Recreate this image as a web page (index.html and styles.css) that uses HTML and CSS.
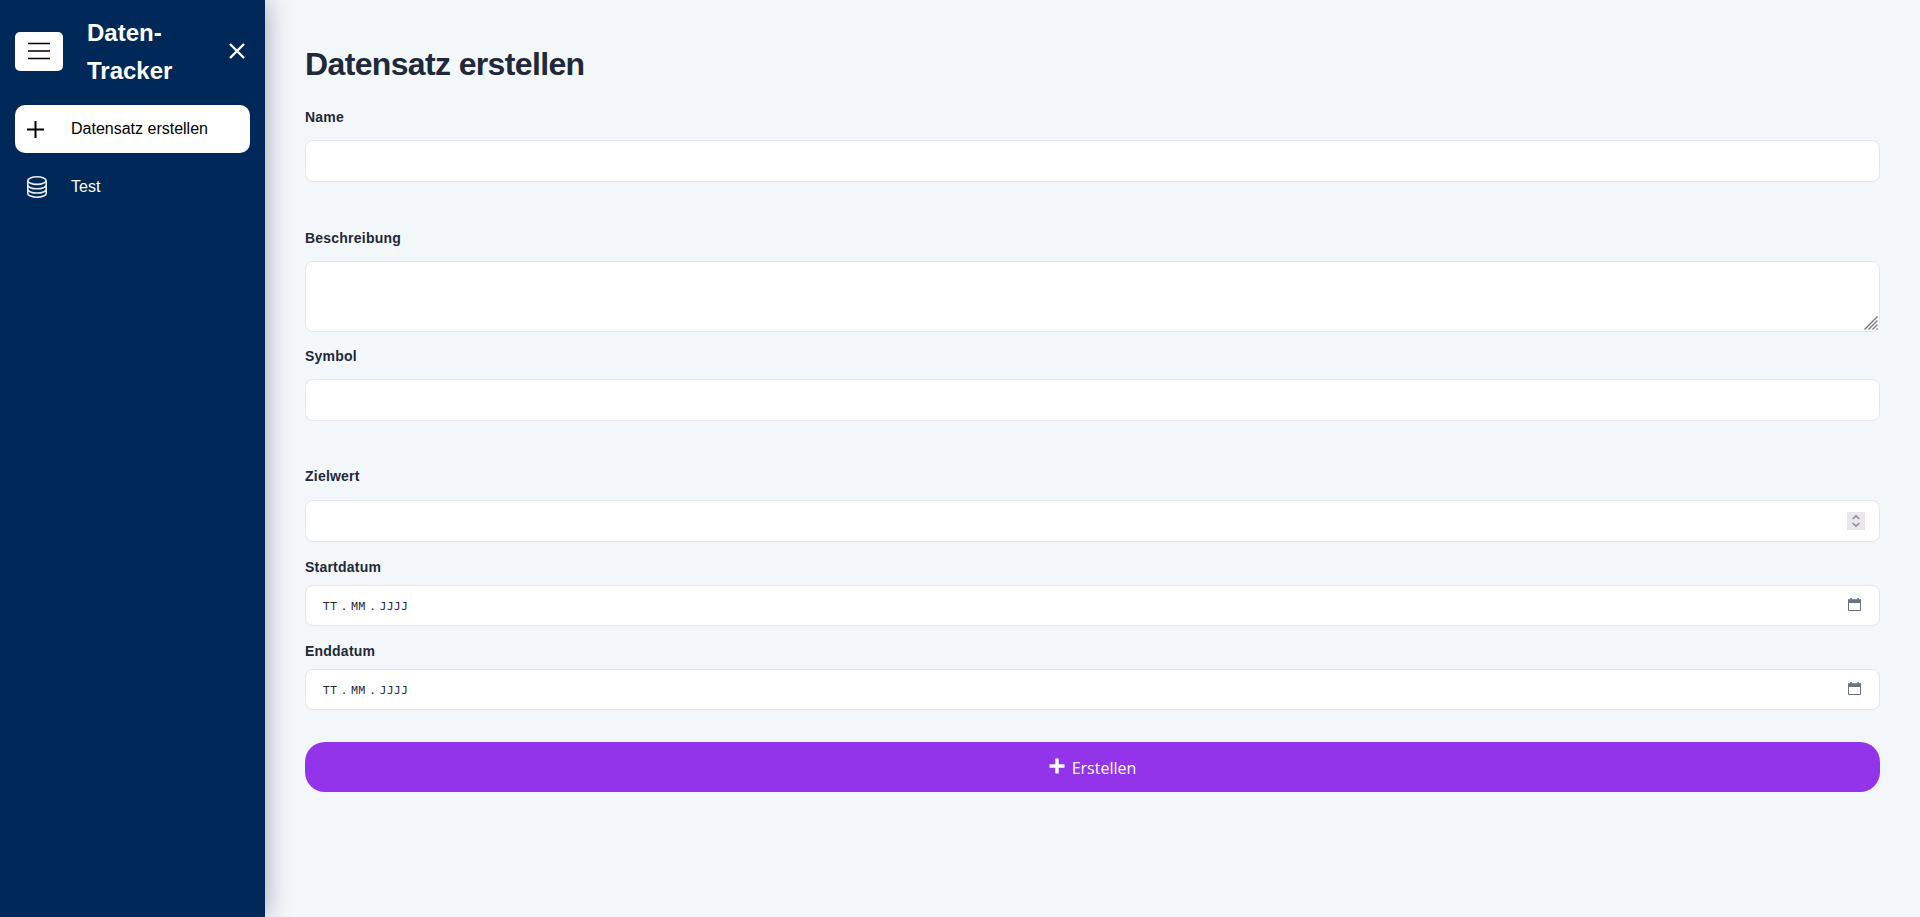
FILE: index.html
```
<!DOCTYPE html>
<html lang="de">
<head>
<meta charset="utf-8">
<title>Daten-Tracker</title>
<link rel="stylesheet" href="styles.css">
</head>
<body>
<aside class="sidebar">
  <header class="brand">
    <button class="menu" aria-label="Menü"><svg width="22" height="18" viewBox="0 0 22 18"><path d="M0 1.5h22M0 9h22M0 16.5h22" stroke="#000" stroke-width="1.7"/></svg></button>
    <div class="brand-name">Daten-<br>Tracker</div>
    <button class="close" aria-label="Schließen"><svg width="16" height="16" viewBox="0 0 16 16"><path d="M1 1l14 14M15 1L1 15" stroke="#fff" stroke-width="2.4"/></svg></button>
  </header>
  <nav class="nav">
    <a class="nav-item active"><span class="nav-icon"><svg width="17" height="17" viewBox="0 0 17 17"><path d="M8.5 0v17M0 8.5h17" stroke="#000" stroke-width="2"/></svg></span><span class="nav-text">Datensatz erstellen</span></a>
    <a class="nav-item"><span class="nav-icon"><svg width="20" height="22" viewBox="0 0 20 22" fill="none" stroke="#e8edf3" stroke-width="1.6"><ellipse cx="10" cy="4.6" rx="9.2" ry="3.8"/><path d="M.8 4.6v12.8c0 2.1 4.1 3.8 9.2 3.8s9.2-1.7 9.2-3.8V4.6M.8 9c0 2.1 4.1 3.8 9.2 3.8s9.2-1.7 9.2-3.8M.8 13.2c0 2.1 4.1 3.8 9.2 3.8s9.2-1.7 9.2-3.8"/></svg></span><span class="nav-text">Test</span></a>
  </nav>
</aside>
<main class="content">
  <h1 class="title">Datensatz erstellen</h1>
  <form class="form">
    <div class="field spaced"><label class="label" for="name">Name</label><input class="box" id="name" type="text"></div>
    <div class="field description"><label class="label" for="desc">Beschreibung</label><div class="box area" id="desc"><svg width="14" height="14" viewBox="0 0 14 14" stroke="#77757f" stroke-width="1.4"><path d="M.5 13.5l13-13M4.5 13.5l9-9M8.5 13.5l5-5M12.5 13.5l1-1"/></svg></div></div>
    <div class="field symbol"><label class="label" for="symbol">Symbol</label><input class="box" id="symbol" type="text"></div>
    <div class="field goal"><label class="label" for="goal">Zielwert</label><div class="box number" id="goal"><span class="spinner"><svg width="8" height="12" viewBox="0 0 8 12" fill="none" stroke="#8f8d99" stroke-width="1.6"><path d="M.6 4L4 .9 7.4 4M.6 8L4 11.1 7.4 8"/></svg></span></div></div>
    <div class="field date-field"><label class="label" for="start">Startdatum</label><div class="box date" id="start"><span class="date-text"><span>TT</span><span class="dot">.</span><span>MM</span><span class="dot">.</span><span>JJJJ</span></span><svg class="calendar" width="13" height="13" viewBox="0 0 13 13"><path d="M.5 3.5h12v9H.5z" fill="#fff" stroke="#6b7280"/><path d="M0 1.3h13V5H0zM2.3 0h1.6v2H2.3zM9.2 0h1.6v2H9.2z" fill="#6b7280"/></svg></div></div>
    <div class="field date-field"><label class="label" for="end">Enddatum</label><div class="box date" id="end"><span class="date-text"><span>TT</span><span class="dot">.</span><span>MM</span><span class="dot">.</span><span>JJJJ</span></span><svg class="calendar" width="13" height="13" viewBox="0 0 13 13"><path d="M.5 3.5h12v9H.5z" fill="#fff" stroke="#6b7280"/><path d="M0 1.3h13V5H0zM2.3 0h1.6v2H2.3zM9.2 0h1.6v2H9.2z" fill="#6b7280"/></svg></div></div>
    <button class="submit" type="button"><svg class="submit-icon" width="16" height="16" viewBox="0 0 16 16"><path d="M8 .5v15M.5 8h15" stroke="#fff" stroke-width="3.4"/></svg><span class="submit-text">Erstellen</span></button>
  </form>
</main>
</body>
</html>
```
FILE: styles.css
```
* { box-sizing: border-box; }
body { margin: 0; height: 917px; display: flex; overflow: hidden; background: #f3f7fa; color: #1e293b; font-family: "Liberation Sans", Arial, sans-serif; }
button { border: 0; padding: 0; font: inherit; display: flex; align-items: center; justify-content: center; }
svg { display: block; flex: none; }
.sidebar { width: 265px; flex: none; background: #002959; color: #fff; padding: 14px 15px; box-shadow: 0 0 24px rgba(0, 10, 60, .36); z-index: 1; }
.brand { display: flex; align-items: center; height: 76px; }
.menu { width: 48px; height: 39px; background: #fff; border-radius: 5px; margin-bottom: 2px; }
.brand-name { margin-left: 24px; font-size: 24px; line-height: 38px; font-weight: 700; flex: 1; }
.close { background: none; margin: 0 5px 2px 0; }
.nav { display: flex; flex-direction: column; gap: 10px; margin-top: 15px; }
.nav-item { height: 48px; display: flex; align-items: center; border-radius: 10px; padding-left: 12px; font-size: 16px; }
.active { background: #fff; color: #000; }
.nav-icon { width: 44px; }
.content { flex: 1; padding: 43px 40px 0; }
.title { margin: 0; font-size: 32px; line-height: 42px; font-weight: 700; letter-spacing: -.64px; }
.form { display: flex; flex-direction: column; margin-top: 22px; }
.field { display: flex; flex-direction: column; gap: 13px; margin-bottom: 15px; }
.label { font-size: 14px; line-height: 20px; font-weight: 700; letter-spacing: .22px; }
.box { width: 100%; height: 42px; background: #fff; border: 1px solid #e5e7eb; border-radius: 8px; padding: 0 14px; font-size: 16px; }
.spaced { margin-bottom: 46px; }
.description { margin-bottom: 14px; }
.symbol { margin-bottom: 45px; }
.goal { gap: 14px; }
.area { height: 71px; display: flex; align-items: flex-end; justify-content: flex-end; padding: 0 1px 1px; }
.number { display: flex; align-items: center; justify-content: flex-end; }
.spinner { width: 18px; height: 18px; background: #e9e7ed; display: flex; align-items: center; justify-content: center; }
.date-field { gap: 8px; }
.date { height: 41px; display: flex; align-items: center; justify-content: space-between; padding: 0 18px 0 17px; }
.date-text { display: flex; font: 11px "DejaVu Sans Mono", monospace; letter-spacing: .55px; padding-top: 1px; }
.dot { width: 14px; text-align: center; }
.calendar { margin-bottom: 2px; }
.submit { width: 100%; height: 50px; margin-top: 17px; gap: 7px; border-radius: 20px; background: #9333ea; color: #fff; font-size: 16px; font-family: "Open Sans", "Noto Sans", sans-serif; }
.submit-icon { margin-bottom: 2px; }
.submit-text { padding-top: 2px; }
```
